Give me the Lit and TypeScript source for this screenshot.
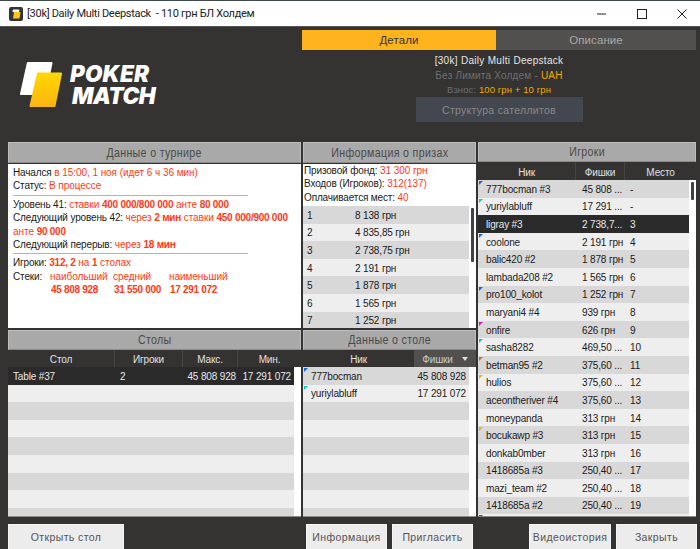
import { LitElement, html, css } from "lit";
import { customElement } from "lit/decorators.js";

const prizes = [
  ["1", "8 138 грн"], ["2", "4 835,85 грн"], ["3", "2 738,75 грн"], ["4", "2 191 грн"],
  ["5", "1 878 грн"], ["6", "1 565 грн"], ["7", "1 252 грн"],
];
const players: [string, string, string, string?][] = [
  ["777bocman #3", "45 808 ...", "-", "#1468e0"],
  ["yuriylabluff", "17 291 ...", "-", "#14c8c8"],
  ["ligray #3", "2 738,7...", "3"],
  ["coolone", "2 191 грн", "4", "#1468e0"],
  ["balic420 #2", "1 878 грн", "5"],
  ["lambada208 #2", "1 565 грн", "6"],
  ["pro100_kolot", "1 252 грн", "7", "#1468e0"],
  ["maryani4 #4", "939 грн", "8"],
  ["onfire", "626 грн", "9", "#e014c8"],
  ["sasha8282", "469,50 ...", "10", "#14c8c8"],
  ["betman95 #2", "375,60 ...", "11", "#d07020"],
  ["hulios", "375,60 ...", "12", "#f0b010"],
  ["aceontheriver #4", "375,60 ...", "13"],
  ["moneypanda", "313 грн", "14"],
  ["bocukawp #3", "313 грн", "15", "#f0b010"],
  ["donkab0mber", "313 грн", "16"],
  ["1418685a #3", "250,40 ...", "17"],
  ["mazi_team #2", "250,40 ...", "18"],
  ["1418685a #2", "250,40 ...", "19"],
  ["", "", "", "#e01020"],
];

@customElement("app-root")
export class AppRoot extends LitElement {
  static styles = css`
    :host { display: block; width: 700px; height: 549px; overflow: hidden; background: #343331;
      font-family: "Liberation Sans", Arial, sans-serif; font-size: 10px; letter-spacing: -0.15px; color: #1a1a1a; }
    .titlebar { background: #fff; border-top: 1px solid #3d4a4a; border-bottom: 1px solid #555;
      display: flex; align-items: center; padding-left: 9px; height: 25px; overflow: hidden;
      font-family: Roboto, "Noto Sans", sans-serif; font-size: 11px; letter-spacing: -0.3px; color: #222; }
    .appicon { width: 14px; height: 14px; background: #333; border-radius: 2px; margin-right: 4px; display: block; }
    .title { flex: 1; white-space: pre; }
    .winbtns { display: flex; margin-right: -2px; }
    .winbtn { width: 40px; height: 25px; display: flex; align-items: center; justify-content: center; }
    .top { height: 115px; display: flex; }
    .logo { width: 302px; box-sizing: border-box; padding: 34px 0 0 20px; display: flex; gap: 8px; align-items: flex-start; }
    .logotext { font-family: Inter, "Liberation Sans", sans-serif; font-weight: 900; font-style: italic; color: #fff;
      font-size: 22.5px; line-height: 22px; letter-spacing: -0.5px; margin-top: 2px; }
    .logotext span { display: block; }
    .logotext span:first-child { letter-spacing: 0.2px; }
    .logotext span + span { margin-left: 2px; }
    .details { width: 394px; display: flex; flex-direction: column; align-items: center; }
    .tabs { display: flex; width: 100%; height: 20px; margin-top: 3px; font-size: 11.5px; letter-spacing: 0.1px; }
    .tab { flex: 1; display: flex; align-items: center; justify-content: center; }
    .tab.on { background: #ffb41e; color: #333; flex: 0 0 194px; }
    .tab.off { background: #51504e; color: #a8a8a8; }
    .d1 { color: #e6e6e6; margin-top: 3px; line-height: 15px; letter-spacing: 0.3px; }
    .d2 { color: #6f6f6f; line-height: 15px; letter-spacing: 0.2px; }
    .d3 { color: #6f6f6f; font-size: 9.5px; line-height: 14px; letter-spacing: 0.1px; }
    .gold { color: #f2a900; }
    .sat { width: 167px; height: 25px; background: #434750; color: #888; display: flex; align-items: center;
      justify-content: center; font-size: 10.5px; letter-spacing: 0.3px; }
    .main { display: grid; grid-template-columns: 293px 173px 218px; column-gap: 2px; height: 375px; padding-left: 8px; }
    .col { display: flex; flex-direction: column; min-height: 0; overflow: hidden; border-bottom: 1px solid #8a8a8a; }
    .hdr { flex: none; height: 20px; background: #a9a9a9; border: 1px solid #bdbdbd; border-bottom-color: #8a8a8a; box-sizing: border-box;
      display: flex; align-items: center; justify-content: center; color: #4a4a4a; font-size: 12.5px; letter-spacing: 0.4px; white-space: nowrap; }
    .hdr span { display: inline-block; transform: scaleX(0.85); }
    .hdr.tall { height: 21px; margin-bottom: 1px; }
    .white { background: #fff; }
    .info { height: 164px; flex: none; box-sizing: border-box; padding: 2px 5px 0; line-height: 13.4px; margin-bottom: 2px; }
    .r { color: #ff3a14; letter-spacing: -0.05px; }
    .r b { font-weight: 700; letter-spacing: -0.25px; }
    hr { border: 0; height: 1px; background: #b5b5b5; margin: 2px 48px 2px 0; }
    .stacks { display: grid; grid-template-columns: 37px 63px 56px auto; justify-content: start; }
    .stacks b { color: #ff3a14; letter-spacing: -0.3px; padding-left: 1px; }
    .prize { height: 164px; flex: none; display: flex; flex-direction: column; margin-bottom: 2px; overflow: hidden; }
    .ptext { padding: 0 1px; flex: none; height: 42px; box-sizing: border-box; line-height: 13.4px; }
    .listwrap { flex: 1; min-height: 0; display: flex; background: #fff; overflow: hidden; }
    .rows { flex: 1; min-width: 0; overflow: hidden; }
    .track { flex: none; width: 7px; box-sizing: border-box; padding: 2px; }
    .thumb { width: 3px; background: #3f424a; border-radius: 1px; }
    .row { height: 17.6px; box-sizing: border-box; padding-top: 1px; display: flex; align-items: center; background: #eeeeee; position: relative; white-space: nowrap; }
    .row:nth-child(odd) { background: #d8d8d8; }
    .row.sel { background: #2a2a2a; color: #e8e8e8; }
    .row.tsel { background: #2a2a2a !important; color: #e8e8e8; }
    .mark { position: absolute; left: 1px; top: 1px; width: 0; height: 0; border-style: solid; border-width: 4px 4px 0 0; border-right-color: transparent; border-bottom-color: transparent; border-left-color: transparent; }
    .ch { flex: none; height: 17px; display: flex; background: #343331; color: #e0e0e0; }
    .ch > div { display: flex; align-items: center; justify-content: center; box-sizing: border-box; border-right: 1px solid #454545; padding-top: 1px; }
    .ch .sorted { background: #51504e; color: #ccc; border: 0; gap: 9px; }
    .arrow { width: 0; height: 0; border: 3.5px solid transparent; border-top: 4px solid #ddd; border-bottom: 0; }
    .c-prize1 { width: 52px; padding-left: 4px; box-sizing: border-box; flex: none; }
    .c-nick { width: 104px; padding-left: 8px; box-sizing: border-box; flex: none; overflow: hidden; }
    .c-chips { width: 48px; box-sizing: border-box; flex: none; }
    .tc1 { flex: none; width: 112px; padding-left: 5px; box-sizing: border-box; }
    .tc2 { flex: none; width: 63px; }
    .tc3 { flex: none; width: 53px; text-align: right; }
    .tc4 { flex: none; width: 55px; text-align: right; }
    .dn1 { flex: 1; padding-left: 8px; }
    .dn2 { flex: none; padding-right: 3px; text-align: right; }
    .bottom { height: 25px; margin-top: 7px; padding-left: 8px; display: flex; }
    .btn { height: 25px; box-sizing: border-box; background: #ececec; color: #555; display: flex; align-items: center;
      justify-content: center; font-size: 10.5px; letter-spacing: 0.4px; border: 1px solid #f6f6f6; border-bottom: 0; flex: none; }
  `;

  private mark(c?: string) {
    return c ? html`<span class="mark" style="border-top-color:${c}"></span>` : "";
  }

  render() {
    return html`
      <div class="titlebar">
        <svg class="appicon" viewBox="0 0 14 14"><path d="M4 2.500h6.500L10 5H3.500z" fill="#fff"/><path d="M5 5h6.500L10.500 11.500H4z" fill="#ffc414"/></svg>
        <div class="title">[30k] Daily Multi Deepstack  - 110 грн БЛ Холдем</div>
        <div class="winbtns">
          <div class="winbtn"><svg width="10" height="10" viewBox="0 0 10 10"><path d="M0 5h9" stroke="#222" fill="none"/></svg></div>
          <div class="winbtn"><svg width="10" height="10" viewBox="0 0 10 10"><rect x=".5" y=".5" width="9" height="9" fill="none" stroke="#222"/></svg></div>
          <div class="winbtn"><svg width="10" height="10" viewBox="0 0 10 10"><path d="M.5.5l9 9M9.500.5l-9 9" stroke="#222" fill="none"/></svg></div>
        </div>
      </div>
      <div class="top">
        <div class="logo">
          <svg width="42" height="46" viewBox="0 0 42 46">
            <defs><linearGradient id="g" x1="0" y1="0" x2="0" y2="1"><stop offset="0" stop-color="#ffd800"/><stop offset="1" stop-color="#fbb414"/></linearGradient></defs>
            <path d="M8 1h23.500a1 1 0 0 1 1 1.200L26 34H1a1 1 0 0 1-1-1.200L6.800 2A1.500 1.500 0 0 1 8 1z" fill="#fff"/>
            <path d="M18 11.500h23a1 1 0 0 1 1 1.200L35.500 45a1 1 0 0 1-1 1H10.500a1 1 0 0 1-1-1.200L17 12.500a1 1 0 0 1 1-1z" fill="url(#g)"/>
          </svg>
          <div class="logotext"><span>POKER</span><span>MATCH</span></div>
        </div>
        <div class="details">
          <div class="tabs"><div class="tab on">Детали</div><div class="tab off">Описание</div></div>
          <div class="d1">[30k] Daily Multi Deepstack</div>
          <div class="d2">Без Лимита Холдем - <span class="gold">UAH</span></div>
          <div class="d3">Взнос: <span class="gold">100 грн + 10 грн</span></div>
          <div class="sat">Структура сателлитов</div>
        </div>
      </div>
      <div class="main">
        <div class="col">
          <div class="hdr tall"><span>Данные о турнире</span></div>
          <div class="info white">
            <div>Начался <span class="r">в 15:00, 1 ноя (идет 6 ч 36 мин)</span></div>
            <div>Статус: <span class="r">В процессе</span></div>
            <hr />
            <div>Уровень 41: <span class="r">ставки <b>400 000/800 000</b> анте <b>80 000</b></span></div>
            <div>Следующий уровень 42: <span class="r">через <b>2 мин</b> ставки <b>450 000/900 000</b> анте <b>90 000</b></span></div>
            <div>Следующий перерыв: <span class="r">через <b>18 мин</b></span></div>
            <hr />
            <div>Игроки: <span class="r"><b>312, 2</b> на <b>1</b> столах</span></div>
            <div class="stacks">
              <span>Стеки:</span><span class="r">наибольший</span><span class="r">средний</span><span class="r">наименьший</span>
              <span></span><b>45 808 928</b><b>31 550 000</b><b>17 291 072</b>
            </div>
          </div>
          <div class="hdr"><span>Столы</span></div>
          <div class="ch">
            <div style="width:107px">Стол</div><div style="width:68px">Игроки</div><div style="width:55px">Макс.</div><div style="width:63px;border:0">Мин.</div>
          </div>
          <div class="listwrap">
            <div class="rows">
              <div class="row tsel"><div class="tc1">Table #37</div><div class="tc2">2</div><div class="tc3">45 808 928</div><div class="tc4">17 291 072</div></div>
              ${Array.from({ length: 8 }, () => html`<div class="row"></div>`)}
            </div>
            <div class="track"></div>
          </div>
        </div>
        <div class="col">
          <div class="hdr tall"><span>Информация о призах</span></div>
          <div class="prize white">
            <div class="ptext">
              <div>Призовой фонд: <span class="r">31 300 грн</span></div>
              <div>Входов (Игроков): <span class="r">312(137)</span></div>
              <div>Оплачивается мест: <span class="r">40</span></div>
            </div>
            <div class="listwrap">
              <div class="rows">
                ${prizes.map(([a, b]) => html`<div class="row"><div class="c-prize1">${a}</div><div>${b}</div></div>`)}
              </div>
              <div class="track"><div class="thumb" style="height:54px"></div></div>
            </div>
          </div>
          <div class="hdr"><span>Данные о столе</span></div>
          <div class="ch">
            <div style="width:111px;border:0">Ник</div><div class="sorted" style="width:62px">Фишки<span class="arrow"></span></div>
          </div>
          <div class="listwrap">
            <div class="rows">
              <div class="row">${this.mark("#1468e0")}<div class="dn1">777bocman</div><div class="dn2">45 808 928</div></div>
              <div class="row">${this.mark("#14c8c8")}<div class="dn1">yuriylabluff</div><div class="dn2">17 291 072</div></div>
              ${Array.from({ length: 7 }, () => html`<div class="row"></div>`)}
            </div>
            <div class="track"></div>
          </div>
        </div>
        <div class="col">
          <div class="hdr"><span>Игроки</span></div>
          <div class="ch" style="margin-top:1px">
            <div style="width:98px">Ник</div><div style="width:49px">Фишки</div><div style="width:71px;border:0">Место</div>
          </div>
          <div class="listwrap">
            <div class="rows">
              ${players.map(([n, c, p, m], i) => html`<div class="row ${i === 2 ? "sel" : ""}">${this.mark(m)}<div class="c-nick">${n}</div><div class="c-chips">${c}</div><div>${p}</div></div>`)}
            </div>
            <div class="track"><div class="thumb" style="height:18px"></div></div>
          </div>
        </div>
      </div>
      <div class="bottom">
        <div class="btn" style="width:116px;margin-right:182px">Открыть стол</div>
        <div class="btn" style="width:81px;margin-right:5px">Информация</div>
        <div class="btn" style="width:81px;margin-right:56px">Пригласить</div>
        <div class="btn" style="width:82px;margin-right:5px">Видеоистория</div>
        <div class="btn" style="width:81px">Закрыть</div>
      </div>
    `;
  }
}
